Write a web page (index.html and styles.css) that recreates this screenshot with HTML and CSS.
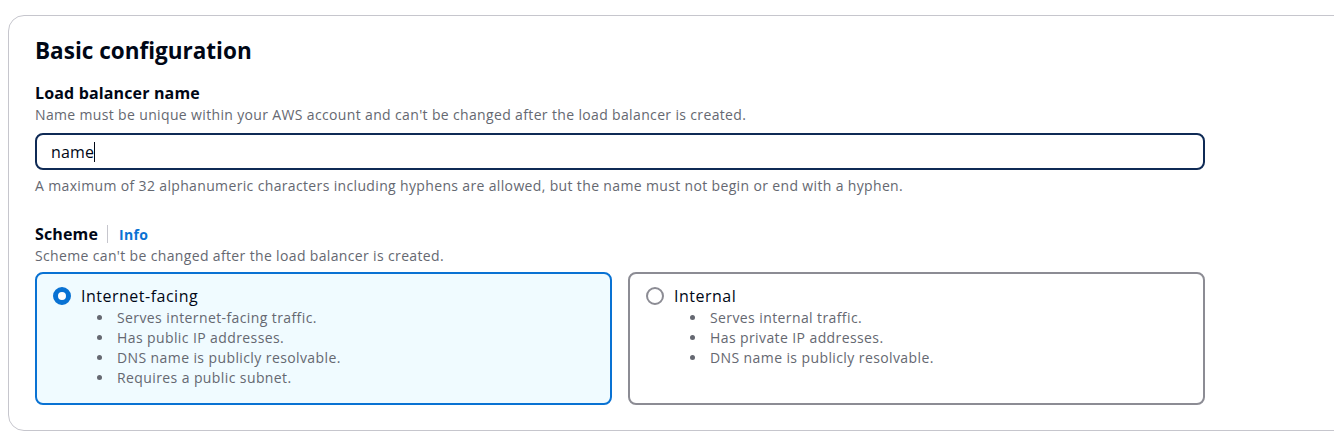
FILE: index.html
```html
<!DOCTYPE html>
<html>
<head>
<meta charset="utf-8">
<link rel="stylesheet" href="styles.css">
</head>
<body>
<div class="panel">
  <h2 class="title">Basic configuration</h2>
  <div class="field">
    <div class="label">Load balancer name</div>
    <div class="desc">Name must be unique within your AWS account and can't be changed after the load balancer is created.</div>
    <div class="input"><span class="value">name</span><span class="caret"></span></div>
    <div class="constraint">A maximum of 32 alphanumeric characters including hyphens are allowed, but the name must not begin or end with a hyphen.</div>
  </div>
  <div class="field scheme">
    <div class="label-row"><span class="label">Scheme</span><span class="sep"></span><a class="info">Info</a></div>
    <div class="desc">Scheme can't be changed after the load balancer is created.</div>
    <div class="cards">
      <div class="card selected">
        <div class="card-head"><span class="radio on"></span><span class="card-title">Internet-facing</span></div>
        <ul class="bullets">
          <li>Serves internet-facing traffic.</li>
          <li>Has public IP addresses.</li>
          <li>DNS name is publicly resolvable.</li>
          <li>Requires a public subnet.</li>
        </ul>
      </div>
      <div class="card">
        <div class="card-head"><span class="radio"></span><span class="card-title">Internal</span></div>
        <ul class="bullets">
          <li>Serves internal traffic.</li>
          <li>Has private IP addresses.</li>
          <li>DNS name is publicly resolvable.</li>
        </ul>
      </div>
    </div>
  </div>
</div>
</body>
</html>
```
FILE: styles.css
```css
html, body {
  margin: 0;
  background: #ffffff;
}
body {
  padding: 15px 0 0 8px;
  overflow: hidden;
  font-family: "Open Sans", "Noto Sans", sans-serif;
  color: #000716;
}
.panel {
  width: 1400px;
  box-sizing: border-box;
  border: 1px solid #c6c6cd;
  border-radius: 16px;
  padding: 19px 26px 25px 26px;
  height: 416px;
}
.title {
  margin: 0;
  font-size: 22.5px;
  line-height: 32px;
  font-weight: 700;
  color: #000716;
}
.field {
  width: 1170px;
  margin-top: 14px;
}
.label {
  font-size: 16px;
  font-weight: 700;
  line-height: 24px;
  letter-spacing: 0.15px;
}
.desc, .constraint {
  font-size: 14px;
  line-height: 20px;
  letter-spacing: 0.35px;
  color: #656871;
}
.input {
  margin-top: 8px;
  height: 37px;
  box-sizing: border-box;
  border: 2px solid #0f2a55;
  border-radius: 8px;
  padding: 0 14px;
  display: flex;
  align-items: center;
  font-size: 16px;
  letter-spacing: 0.2px;
}
.caret {
  display: inline-block;
  width: 1px;
  height: 20px;
  background: #000716;
}
.constraint {
  margin-top: 6px;
}
.scheme {
  margin-top: 26px;
}
.label-row {
  display: flex;
  align-items: center;
  height: 24px;
}
.sep {
  width: 1px;
  height: 18px;
  background: #c6c6cd;
  margin: 0 11px 0 9px;
}
.info {
  font-size: 14px;
  font-weight: 700;
  letter-spacing: 0.3px;
  color: #0972d3;
}
.cards {
  display: grid;
  grid-template-columns: 1fr 1fr;
  gap: 16px;
  margin-top: 6px;
}
.card {
  height: 133px;
  box-sizing: border-box;
  border: 2px solid #8c8c94;
  border-radius: 8px;
  padding: 10px 16px;
}
.card.selected {
  border-color: #0972d3;
  background: #f0fbff;
}
.card-head {
  display: flex;
  align-items: center;
  gap: 10px;
  height: 24px;
}
.radio {
  width: 18px;
  height: 18px;
  box-sizing: border-box;
  border-radius: 50%;
  border: 2px solid #8c8c94;
  background: #fff;
}
.radio.on {
  border: 5px solid #0972d3;
}
.card-title {
  font-size: 16px;
  line-height: 24px;
  letter-spacing: 0.5px;
}
.bullets {
  margin: 0;
  padding-left: 61px;
  font-size: 14px;
  line-height: 20px;
  letter-spacing: 0.4px;
  color: #656871;
}
.bullets li {
  padding-left: 3px;
}
```
